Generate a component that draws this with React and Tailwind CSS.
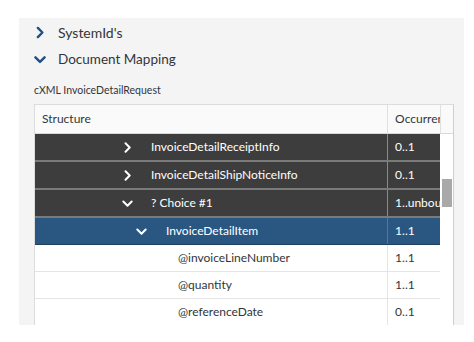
import React from "react";

const ChevRight = ({ className = "", size = 10, sw = 1.8 }) => (
  <svg width={size} height={size} viewBox="0 0 10 10" className={className} fill="none" stroke="currentColor" strokeWidth={sw} strokeLinecap="round" strokeLinejoin="round">
    <path d="M3.2 1.2 L7 5 L3.2 8.8" />
  </svg>
);
const ChevDown = ({ className = "", size = 10, sw = 1.8 }) => (
  <svg width={size} height={size} viewBox="0 0 10 10" className={className} fill="none" stroke="currentColor" strokeWidth={sw} strokeLinecap="round" strokeLinejoin="round">
    <path d="M1.2 3.2 L5 7 L8.8 3.2" />
  </svg>
);

const font = { fontFamily: "Lato, 'Open Sans', sans-serif" };

function DarkRow({ label, occ, open, h }) {
  return (
    <div className={`flex ${h} bg-[#3d3d3d] border-b-2 border-[#7a7a7a] text-white`}>
      <div className="w-[354px] flex items-center border-r border-[#8a8a8a]">
        <div className="w-[84px]" />
        <div className="w-[16px] flex justify-center">
          {open ? <ChevDown size={11} /> : <ChevRight size={11} />}
        </div>
        <div className="ml-[16px] text-[12px]">{label}</div>
      </div>
      <div className="w-[52px] flex items-center pl-[7px] text-[12px] overflow-hidden whitespace-nowrap">{occ}</div>
    </div>
  );
}

function WhiteRow({ label, occ, h }) {
  return (
    <div className={`flex ${h} bg-white border-b border-[#e5e5e5] text-[#32363a]`}>
      <div className="w-[354px] flex items-center border-r border-[#e5e5e5]">
        <div className="w-[143px]" />
        <div className="text-[12px]">{label}</div>
      </div>
      <div className="w-[52px] flex items-center pl-[7px] text-[12px]">{occ}</div>
    </div>
  );
}

export default function App() {
  return (
    <div className="w-[474px] h-[342px] bg-white overflow-hidden" style={font}>
      <div className="pt-[18px] pl-[19px]">
        <div className="w-[445px] h-[307px] bg-[#f4f4f4] overflow-hidden">
          <div className="h-[28px] flex items-center pl-[15px] text-[#32363a]">
            <div className="w-[12px] flex justify-center text-[#1f4f86]"><ChevRight size={13} sw={2} /></div>
            <div className="ml-[12px] text-[14px]">SystemId's</div>
          </div>
          <div className="h-[27px] flex items-center pl-[15px] text-[#32363a]">
            <div className="w-[12px] flex justify-center text-[#1f4f86]"><ChevDown size={13} sw={2} /></div>
            <div className="ml-[12px] text-[13.5px]">Document Mapping</div>
          </div>
          <div className="h-[31px] flex items-end pb-[5px] pl-[15px] text-[10.5px] text-[#32363a]">cXML InvoiceDetailRequest</div>
          <div className="ml-[15px] w-[420px] flex">
            <div className="w-[406px] border-l border-[#dcdcdc] border-t">
              <div className="flex h-[29px] bg-[#fafafa] border-b border-[#d9d9d9] text-[#32363a]">
                <div className="w-[354px] flex items-center pl-[7px] text-[12px] border-r border-[#e0e0e0]">Structure</div>
                <div className="w-[52px] flex items-center pl-[7px] text-[12px] overflow-hidden whitespace-nowrap">Occurrence</div>
              </div>
              <DarkRow label="InvoiceDetailReceiptInfo" occ="0..1" h="h-[28px]" />
              <DarkRow label="InvoiceDetailShipNoticeInfo" occ="0..1" h="h-[28px]" />
              <DarkRow label="? Choice #1" occ="1..unbounded" open h="h-[28px]" />
              <div className="flex h-[27px] bg-[#2a5782] text-white border-b border-[#1e3f60]">
                <div className="w-[354px] flex items-center border-r border-[#4e78a0]">
                  <div className="w-[98px]" />
                  <div className="w-[16px] flex justify-center"><ChevDown size={11} /></div>
                  <div className="ml-[17px] text-[12px]">InvoiceDetailItem</div>
                </div>
                <div className="w-[52px] flex items-center pl-[7px] text-[12px]">1..1</div>
              </div>
              <WhiteRow label="@invoiceLineNumber" occ="1..1" h="h-[27px]" />
              <WhiteRow label="@quantity" occ="1..1" h="h-[27px]" />
              <WhiteRow label="@referenceDate" occ="0..1" h="h-[27px]" />
            </div>
            <div className="w-[14px] flex flex-col border-r border-[#cfcfcf] border-t border-t-[#dcdcdc]">
              <div className="h-[29px] bg-[#fafafa] border-b border-[#d9d9d9] border-l border-l-[#e0e0e0]" />
              <div className="flex-1 bg-white pt-[45px] pl-[2px]">
                <div className="w-[10px] h-[28px] bg-[#a9a9a9]" />
              </div>
            </div>
          </div>
        </div>
      </div>
    </div>
  );
}
